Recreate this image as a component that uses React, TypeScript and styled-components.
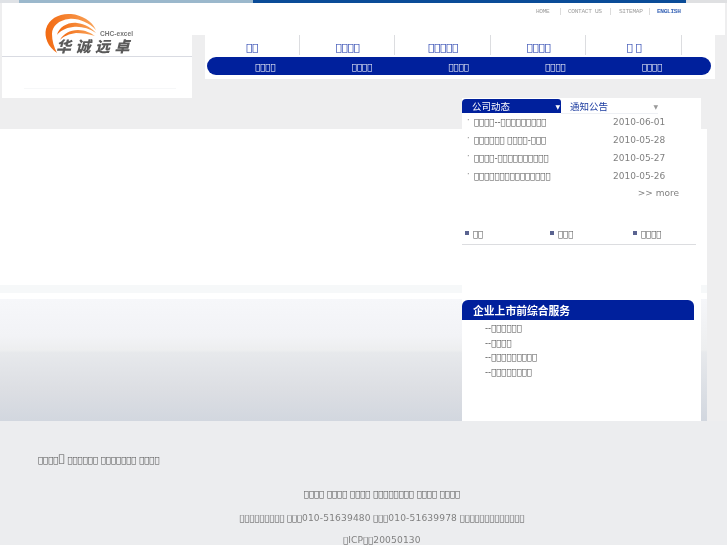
import React from 'react'
import styled, { createGlobalStyle } from 'styled-components'

// the reference shows missing-glyph boxes for most of its text
const box = (n: number) => '\uE000'.repeat(n)

const Global = createGlobalStyle`
  html, body { margin: 0; padding: 0; background: #eeeeef; }
  body { font-family: "DejaVu Sans", sans-serif; font-size: 8.5px; color: #505050; overflow: hidden; }
`

const Page = styled.div`
  width: 727px;
  height: 545px;
  overflow: hidden;
  filter: blur(0.35px);
`

const TopBar = styled.div`
  display: flex;
  height: 3px;
`

const TopSegment = styled.div<{ $w: number; $c: string }>`
  width: ${p => p.$w}px;
  background: ${p => p.$c};
`

const Head = styled.div`
  display: flex;
  height: 95px;
  padding-left: 2px;
`

const LogoPanel = styled.div`
  width: 190px;
  height: 95px;
  background: #fff;
`

const LogoMark = styled.svg`
  display: block;
  width: 190px;
  height: 53px;
  border-bottom: 1px solid #d9dbe2;
`

const FaintRule = styled.div`
  height: 1px;
  margin: 31px 16px 0 22px;
  background: #f6f7f8;
`

const HeadRight = styled.div`
  width: 533px;
`

const UtilBar = styled.div`
  display: flex;
  align-items: center;
  height: 32px;
  padding: 0 0 16px 344px;
  box-sizing: border-box;
  background: #fff;
  font-family: "Liberation Mono", monospace;
  font-size: 6.2px;
  color: #a8a8a8;
`

const UtilLink = styled.span<{ $w: number; $on?: boolean }>`
  display: flex;
  justify-content: space-between;
  width: ${p => p.$w}px;
  white-space: nowrap;
  letter-spacing: -0.35px;
  color: ${p => (p.$on ? '#3d68b8' : '#a0a0a0')};
  font-weight: ${p => (p.$on ? 700 : 400)};
`

const UtilSep = styled.i<{ $mr: number }>`
  width: 1px;
  height: 7px;
  margin-right: ${p => p.$mr}px;
  background: #dcdcdc;
`

const NavPanel = styled.div`
  width: 510px;
  height: 44px;
  margin-left: 13px;
  background: #fff;
`

const NavTop = styled.div`
  display: flex;
  height: 20px;
  margin-left: -1px;
`

const NavCell = styled.div`
  width: 95.5px;
  display: flex;
  align-items: center;
  justify-content: center;
  padding: 4px 0 0 2px;
  box-sizing: border-box;
  border-right: 1px solid #dcdde0;
  color: #0c2aa4;
  font-size: 10px;
  white-space: pre;
`

const NavPill = styled.div`
  display: flex;
  align-items: center;
  height: 18px;
  width: 504px;
  margin: 2px 0 0 2px;
  padding: 2px 0 0 10px;
  box-sizing: border-box;
  border-radius: 9px;
  background: #00209c;
`

const PillItem = styled.div`
  width: 96.7px;
  text-align: center;
  color: #fff;
  font-size: 8.5px;
`

const Main = styled.div`
  display: flex;
  height: 323px;
`

const LeftCol = styled.div`
  width: 462px;
  padding-top: 31px;
  display: flex;
  flex-direction: column;
`

const Hero = styled.div`
  height: 156px;
  background: #fff;
`

const Stripe = styled.div`
  height: 8px;
  background: #f6f8f9;
`

const Gap = styled.div`
  height: 6px;
  background: #fff;
`

const Fade = styled.div`
  height: 122px;
  background: linear-gradient(#f6f7fa 0%, #f2f3f6 30%, #edeeef 42%, #e7e9ec 44%, #dcdee3 75%, #d2d7df 100%);
`

const RightCol = styled.div`
  width: 245px;
  background: linear-gradient(
    transparent 31px, #fff 31px, #fff 187px, #f6f8f9 187px, #f6f8f9 195px, #fff 195px,
    #fff 201px, #f5f6f9 201px, #edeeef 252px, #e7e9ec 254px, #d2d7df 323px
  );
`

const Card = styled.div`
  width: 239px;
  height: 323px;
  background: #fff;
`

const Tabs = styled.div`
  display: flex;
  height: 14px;
  padding-top: 1px;
`

const Tab = styled.div<{ $on?: boolean }>`
  display: flex;
  align-items: center;
  justify-content: space-between;
  box-sizing: border-box;
  width: ${p => (p.$on ? 99 : 97)}px;
  padding: 0 ${p => (p.$on ? 1 : 0)}px 0 ${p => (p.$on ? 10 : 9)}px;
  border-radius: ${p => (p.$on ? '4px 3px 0 0' : '0')};
  background: ${p => (p.$on ? '#00209c' : '#fff')};
  color: ${p => (p.$on ? '#fff' : '#1c3ca0')};
  box-shadow: ${p => (p.$on ? 'none' : '0 1px 0 #eef0f4')};
  font-family: "Noto Sans CJK SC", sans-serif;
  font-size: 9.5px;
`

const TabArrow = styled.span<{ $on?: boolean }>`
  font-family: "DejaVu Sans", sans-serif;
  font-size: 6px;
  color: ${p => (p.$on ? '#fff' : '#999')};
`

const NewsList = styled.div`
  padding-top: 0;
`

const NewsRow = styled.div`
  display: flex;
  align-items: center;
  height: 18px;
  padding-left: 5px;
`

const Dot = styled.span`
  width: 7px;
  margin-top: -4px;
  font-size: 8px;
  color: #888;
`

const NewsTitle = styled.span`
  width: 139px;
  white-space: nowrap;
`

const NewsDate = styled.span`
  margin-top: -1px;
  font-size: 9px;
  color: #808080;
`

const More = styled.div`
  height: 15px;
  margin-top: 1px;
  padding-right: 22px;
  text-align: right;
  font-size: 9px;
  line-height: 15px;
  color: #808080;
`

const Quick = styled.div`
  display: flex;
  width: 234px;
  height: 20px;
  margin-top: 24px;
  box-sizing: border-box;
  border-bottom: 1px solid #dcdde0;
  padding-left: 3px;
`

const QuickItem = styled.div<{ $w: number }>`
  display: flex;
  align-items: flex-start;
  width: ${p => p.$w}px;
  gap: 4px;
  line-height: 10px;
  padding-top: 4px;
`

const Square = styled.span`
  width: 4px;
  height: 4px;
  margin-top: 2px;
  background: #5a6390;
`

const ServiceHead = styled.div`
  width: 232px;
  height: 20px;
  margin-top: 55px;
  box-sizing: border-box;
  padding-left: 11px;
  border-radius: 6px 6px 0 0;
  background: #00209c;
  color: #fff;
  font-family: "Noto Sans CJK SC", sans-serif;
  font-weight: 700;
  font-size: 10.8px;
  line-height: 21px;
`

const ServiceList = styled.div`
  padding: 1px 0 0 23px;
`

const ServiceItem = styled.div`
  height: 14.6px;
  line-height: 14.6px;
  white-space: nowrap;
`

const Footer = styled.div`
  padding: 33px 0 0 38px;
  background: #ecedef;
  height: 124px;
  box-sizing: border-box;
`

const FootLine = styled.div<{ $center?: boolean; $gap: number; $small?: boolean }>`
  height: 11px;
  margin-left: ${p => (p.$center ? -1 : 0)}px;
  line-height: 11px;
  margin-bottom: ${p => p.$gap}px;
  font-size: ${p => (p.$small ? 8.3 : 8.5)}px;
  text-align: ${p => (p.$center ? 'center' : 'left')};
  white-space: nowrap;
`

const FootNum = styled.span`
  font-size: 9.1px;
  color: #808080;
  letter-spacing: 0.15px;
`

const Raised = styled.span`
  font-size: 10.5px;
  position: relative;
  top: -1px;
`

const navTop = [box(2), box(4), box(5), box(4), `${box(1)} ${box(1)}`]
const news = [
  [`${box(4)}--${box(9)}`, '2010-06-01'],
  [`${box(6)} ${box(4)}-${box(3)}`, '2010-05-28'],
  [`${box(4)}-${box(10)}`, '2010-05-27'],
  [box(15), '2010-05-26'],
]
const quick: [number, number][] = [[2, 85], [3, 83], [4, 60]]
const services = [6, 4, 9, 8]

function Logo() {
  return (
    <LogoMark viewBox="0 0 190 53">
      <defs>
        <linearGradient id="swoosh" x1="0" y1="0" x2="1" y2="0">
          <stop offset="0" stopColor="#f26a12" />
          <stop offset="1" stopColor="#f9a45a" />
        </linearGradient>
      </defs>
      <path d="M55 50 C46 44 42 34 44 26 C47 15 58 10 69 11 C80 12 90 18 94 27 C86 19 76 15 67 16 C57 17 50 23 50 31 C50 38 52 44 55 50Z" fill="url(#swoosh)" />
      <path d="M55 32 C57 24 66 19 75 20 C83 21 90 25 94 30 C87 25 78 23 71 24 C63 25 58 28 55 32Z" fill="url(#swoosh)" />
      <path d="M58 37 C61 31 68 27 76 27 C83 27 89 30 93 33 C87 31 80 30 74 30 C67 31 62 33 58 37Z" fill="url(#swoosh)" />
      <text x="98" y="33" fontFamily="Liberation Sans" fontWeight="700" fontSize="6.6" fill="#777">CHC-excel</text>
      <text x="54" y="49" fontFamily="Noto Sans CJK SC" fontWeight="900" fontStyle="italic" fontSize="15" letterSpacing="4.5" fill="#5a5a5a">华诚远卓</text>
    </LogoMark>
  )
}

export default function App() {
  return (
    <Page>
      <Global />
      <TopBar>
        <TopSegment $w={19} $c="#dfe2e6" />
        <TopSegment $w={234} $c="#9bb8cc" />
        <TopSegment $w={433} $c="#0a4c98" />
        <TopSegment $w={41} $c="#dfe0e2" />
      </TopBar>
      <Head>
        <LogoPanel>
          <Logo />
          <FaintRule />
        </LogoPanel>
        <HeadRight>
          <UtilBar>
            <UtilLink $w={24}>HOME</UtilLink>
            <UtilSep $mr={7} />
            <UtilLink $w={42}>CONTACT US</UtilLink>
            <UtilSep $mr={8} />
            <UtilLink $w={30}>SITEMAP</UtilLink>
            <UtilSep $mr={7} />
            <UtilLink $w={30} $on>ENGLISH</UtilLink>
          </UtilBar>
          <NavPanel>
            <NavTop>
              {navTop.map((t, i) => <NavCell key={i}>{t}</NavCell>)}
            </NavTop>
            <NavPill>
              {[0, 1, 2, 3, 4].map(i => <PillItem key={i}>{box(4)}</PillItem>)}
            </NavPill>
          </NavPanel>
        </HeadRight>
      </Head>
      <Main>
        <LeftCol>
          <Hero />
          <Stripe />
          <Gap />
          <Fade />
        </LeftCol>
        <RightCol>
          <Card>
            <Tabs>
              <Tab $on>公司动态<TabArrow $on>▼</TabArrow></Tab>
              <Tab>通知公告<TabArrow>▼</TabArrow></Tab>
            </Tabs>
            <NewsList>
              {news.map(([title, date]) => (
                <NewsRow key={date}>
                  <Dot>·</Dot>
                  <NewsTitle>{title}</NewsTitle>
                  <NewsDate>{date}</NewsDate>
                </NewsRow>
              ))}
            </NewsList>
            <More>&gt;&gt; more</More>
            <Quick>
              {quick.map(([n, w]) => (
                <QuickItem key={n} $w={w}><Square />{box(n)}</QuickItem>
              ))}
            </Quick>
            <ServiceHead>企业上市前综合服务</ServiceHead>
            <ServiceList>
              {services.map((n, i) => <ServiceItem key={i}>--{box(n)}</ServiceItem>)}
            </ServiceList>
          </Card>
        </RightCol>
      </Main>
      <Footer>
        <FootLine $gap={24}>{box(4)}<Raised>{box(1)}</Raised> {box(6)} {box(7)} {box(4)}</FootLine>
        <FootLine $center $gap={13}>{box(4)} {box(4)} {box(4)} {box(8)} {box(4)} {box(4)}</FootLine>
        <FootLine $center $small $gap={11}>{box(9)} {box(3)}<FootNum>010-51639480</FootNum> {box(3)}<FootNum>010-51639978</FootNum> {box(13)}</FootLine>
        <FootLine $center $small $gap={0}>{box(1)}<FootNum>ICP</FootNum>{box(2)}<FootNum>20050130</FootNum></FootLine>
      </Footer>
    </Page>
  )
}
